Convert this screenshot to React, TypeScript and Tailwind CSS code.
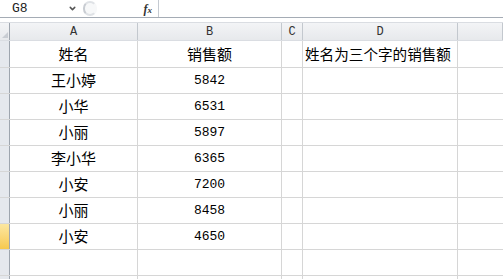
import { ChevronDown } from "lucide-react";

const rows: [string, string, string][] = [
  ["姓名", "销售额", "姓名为三个字的销售额"],
  ["王小婷", "5842", ""],
  ["小华", "6531", ""],
  ["小丽", "5897", ""],
  ["李小华", "6365", ""],
  ["小安", "7200", ""],
  ["小丽", "8458", ""],
  ["小安", "4650", ""],
  ["", "", ""],
  ["", "", ""],
];

const cjk = { fontFamily: '"Noto Sans CJK SC", sans-serif' };
const mono = { fontFamily: '"Liberation Mono", monospace' };

export default function App() {
  return (
    <div className="w-[503px] h-[279px] overflow-hidden bg-white text-black">
      {/* formula bar */}
      <div className="flex h-[18px] border-b border-[#a5acb5] bg-white">
        <div className="flex w-[80px] items-center justify-between pl-[12px] pr-[3px]">
          <span className="text-[13px] leading-none text-[#222]" style={mono}>
            G8
          </span>
          <ChevronDown className="w-[9px] h-[9px] text-[#555]" strokeWidth={4} />
        </div>
        <div className="flex w-[78px] items-center pl-[3px]">
          <div className="w-[14px] h-[15px] rounded-full border-[2px] border-l-[#c8ccd2] border-t-[#dfe2e6] border-b-[#dfe2e6] border-r-transparent bg-[#f7f8f9]" />
          <span
            className="ml-auto mr-[6px] text-[12px] italic font-bold text-[#333]"
            style={{ fontFamily: '"Liberation Serif", serif' }}
          >
            f<span className="text-[9px]">x</span>
          </span>
        </div>
        <div className="flex-1 border-l border-[#c5cad1]" />
      </div>
      <div className="h-[4px] bg-white" />

      {/* column headers */}
      <div className="grid h-[19px] grid-cols-[10px_128px_144px_21px_155px_1fr] border-t border-[#dadde2] border-b border-[#9ea5ae] bg-gradient-to-b from-[#f3f4f6] to-[#e7e9ec] text-[12px] text-[#333]" style={mono}>
        <div className="flex items-end justify-end border-r border-[#9ea5ae] pb-[2px] pr-[1px]">
          <div className="w-0 h-0 border-l-[6px] border-l-transparent border-b-[6px] border-b-[#c9cdd3]" />
        </div>
        {["A", "B", "C", "D", ""].map((c, i) => (
          <div key={i} className="flex items-center justify-center border-r border-[#c3c8ce] leading-none">
            {c}
          </div>
        ))}
      </div>

      {/* data rows */}
      {rows.map((r, i) => (
        <div
          key={i}
          className={`grid grid-cols-[10px_128px_144px_21px_155px_1fr] border-b border-[#d6d6d6] ${i === 0 ? "h-[27px]" : "h-[26px]"}`}
        >
          <div
            className={`border-r border-[#9ea5ae] ${i === 7 ? "bg-gradient-to-b from-[#fce7a0] to-[#f7c94c]" : "bg-[#e5e8ed]"}`}
          />
          <div className="flex items-center justify-center border-r border-[#d6d6d6] text-[15px]" style={cjk}>
            {r[0]}
          </div>
          <div
            className="flex items-center justify-center border-r border-[#d6d6d6] text-[15px]"
            style={i === 0 ? cjk : { ...mono, fontSize: "13px" }}
          >
            {r[1]}
          </div>
          <div className="border-r border-[#d6d6d6]" />
          <div className="flex items-center pl-[2px] border-r border-[#d6d6d6] text-[14.6px] whitespace-nowrap" style={cjk}>
            {r[2]}
          </div>
          <div />
        </div>
      ))}
    </div>
  );
}
